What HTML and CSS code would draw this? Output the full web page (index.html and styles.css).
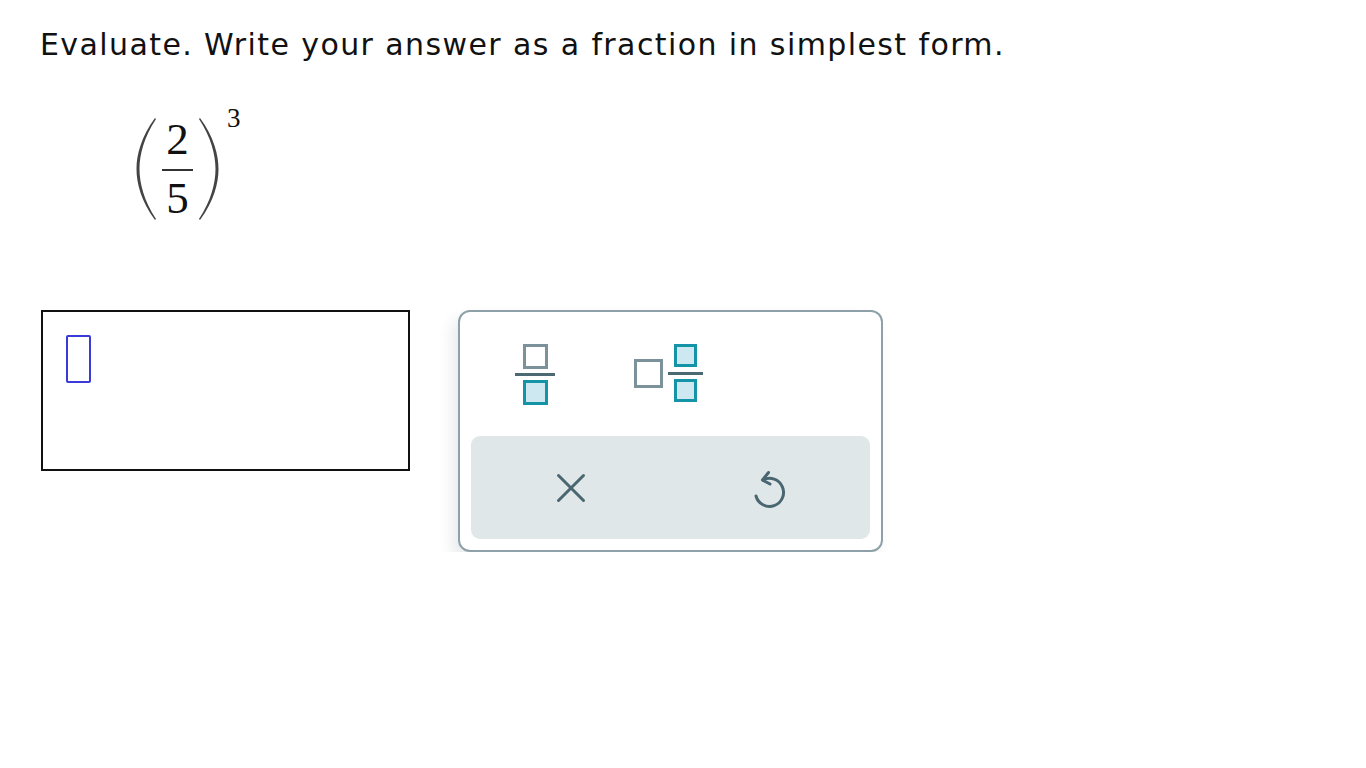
FILE: index.html
```html
<!DOCTYPE html>
<html>
<head>
<meta charset="utf-8">
<link rel="stylesheet" href="styles.css">
</head>
<body>
<div class="page">
  <p class="prompt">Evaluate. Write your answer as a fraction in simplest form.</p>
  <div class="math">
    <svg class="paren" width="22" height="104" viewBox="0 0 22 104"><path d="M20 1 C6 20 1.5 38 1.5 52 C1.5 66 6 84 20 103 L21 102 C9 84 4.5 66 4.5 52 C4.5 38 9 20 21 2 Z"/></svg>
    <div class="frac">
      <div class="num">2</div>
      <div class="bar"></div>
      <div class="den">5</div>
    </div>
    <svg class="paren" width="22" height="104" viewBox="0 0 22 104"><path d="M2 1 C16 20 20.5 38 20.5 52 C20.5 66 16 84 2 103 L1 102 C13 84 17.5 66 17.5 52 C17.5 38 13 20 1 2 Z"/></svg>
    <div class="sup">3</div>
  </div>
  <div class="answer-row">
    <div class="answer-box"><span class="cursor"></span></div>
    <div class="keypad">
      <div class="keys-top">
        <button class="key">
          <svg width="42" height="64" viewBox="0 0 42 64">
            <rect x="10.5" y="3.5" width="22" height="22" class="sq-grey"/>
            <line x1="1" y1="32.5" x2="41" y2="32.5" class="fbar"/>
            <rect x="10.5" y="39.5" width="22" height="22" class="sq-teal"/>
          </svg>
        </button>
        <button class="key">
          <svg width="74" height="64" viewBox="0 0 74 64">
            <rect x="3.5" y="18.5" width="26" height="26" class="sq-grey"/>
            <rect x="43.5" y="3.5" width="20" height="20" class="sq-teal"/>
            <line x1="36" y1="31.5" x2="71" y2="31.5" class="fbar"/>
            <rect x="43.5" y="38.5" width="20" height="20" class="sq-teal"/>
          </svg>
        </button>
        <div class="key-empty"></div>
      </div>
      <div class="keys-bottom">
        <button class="key">
          <svg width="30" height="30" viewBox="0 0 30 30" class="ico">
            <line x1="2.5" y1="2.5" x2="27.5" y2="27.5"/>
            <line x1="27.5" y1="2.5" x2="2.5" y2="27.5"/>
          </svg>
        </button>
        <button class="key">
          <svg width="34" height="40" viewBox="0 0 34 40" class="ico undo">
            <path d="M10 11 A14 14 0 1 1 3 27"/>
            <path d="M15.5 3.5 L9.5 11 L17 15"/>
          </svg>
        </button>
      </div>
    </div>
  </div>
</div>
</body>
</html>
```

FILE: styles.css
```css
html, body {
  margin: 0;
  padding: 0;
  background: #ffffff;
}

.page {
  padding: 27px 0 0 40px;
  font-family: "DejaVu Sans", Verdana, sans-serif;
  color: #111;
}

.prompt {
  margin: 0;
  font-size: 30px;
  letter-spacing: 1.4px;
  line-height: normal;
}

.math {
  display: flex;
  align-items: flex-start;
  margin: 55px 0 0 95px;
  font-family: "Liberation Serif", "Times New Roman", serif;
  color: #111;
}

.paren {
  display: block;
  fill: #444;
}

.frac {
  display: flex;
  flex-direction: column;
  width: 31px;
  margin: 0 5px;
}

.num, .den {
  font-size: 45px;
  line-height: 44px;
  height: 44px;
  text-align: center;
}

.bar {
  height: 2px;
  background: #333;
  margin: 8px 0 5px;
}

.sup {
  font-size: 27px;
  line-height: 27px;
  margin: -12px 0 0 7px;
}

.answer-row {
  display: flex;
  align-items: flex-start;
  gap: 48px;
  margin-top: 89px;
  margin-left: 1px;
}

.answer-box {
  box-sizing: border-box;
  width: 369px;
  height: 161px;
  border: 2px solid #111;
  padding: 23px 0 0 23px;
}

.cursor {
  display: block;
  box-sizing: border-box;
  width: 25px;
  height: 48px;
  border: 2px solid #3a3ad8;
  border-radius: 2px;
}

.keypad {
  box-sizing: border-box;
  width: 425px;
  height: 242px;
  border: 2px solid #8ea1a8;
  border-radius: 12px;
  padding: 0 11px 11px;
  background: #fff;
  box-shadow: -6px 8px 14px rgba(40, 60, 70, 0.10);
  display: flex;
  flex-direction: column;
}

.key {
  border: 0;
  background: transparent;
  padding: 0;
  margin: 0;
  display: flex;
  align-items: center;
  justify-content: center;
  cursor: pointer;
}

.key svg {
  display: block;
}

.keys-top {
  height: 124px;
  display: grid;
  grid-template-columns: 128px 139px 1fr;
}

.keys-bottom {
  height: 103px;
  background: #e0e7e9;
  border-radius: 9px;
  display: grid;
  grid-template-columns: 1fr 1fr;
}

.sq-grey {
  fill: #fff;
  stroke: #7b929a;
  stroke-width: 3;
}

.sq-teal {
  fill: #cde8f0;
  stroke: #1594a7;
  stroke-width: 3;
}

.fbar {
  stroke: #4c6872;
  stroke-width: 3;
}

.ico {
  fill: none;
  stroke: #4a6670;
  stroke-width: 3;
  stroke-linecap: round;
  stroke-linejoin: round;
}

.undo {
  margin-top: 3px;
}
```
